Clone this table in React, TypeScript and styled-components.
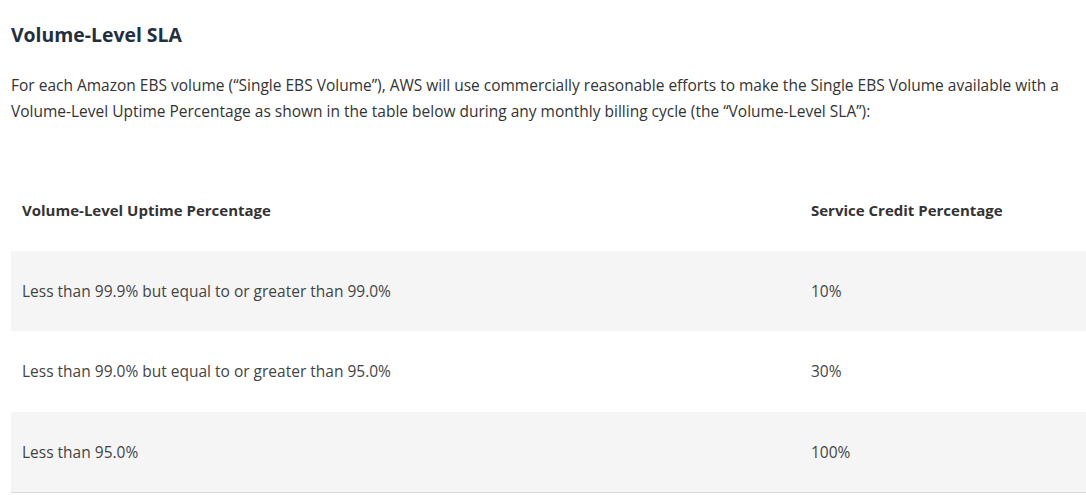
import React from "react";
import styled, { createGlobalStyle } from "styled-components";

const GlobalStyle = createGlobalStyle`
  html, body { margin: 0; padding: 0; background: #ffffff; }
  body { font-family: "Open Sans", "Noto Sans", sans-serif; color: #333333; }
`;

const Page = styled.main`
  padding: 21px 0 0 11px;
  width: 1086px;
  box-sizing: border-box;
  overflow: hidden;
`;

const Heading = styled.h2`
  margin: 0;
  font-size: 19.4px;
  line-height: 28px;
  font-weight: 700;
  color: #232f3e;
`;

const Paragraph = styled.p`
  margin: 23px 0 0;
  font-size: 15.5px;
  line-height: 26px;
  color: #333333;
`;

const Table = styled.table`
  margin-top: 46px;
  width: 1075px;
  border-collapse: collapse;
  border-bottom: 1px solid #d5dbdb;
`;

const Row = styled.tr<{ $shaded?: boolean }>`
  background: ${(p) => (p.$shaded ? "#f5f5f5" : "#ffffff")};
`;

const HeadCell = styled.th<{ $w?: number }>`
  text-align: left;
  padding: 28px 11px;
  height: 24.5px;
  font-size: 15px;
  line-height: 24.5px;
  font-weight: 700;
  color: #333333;
  width: ${(p) => (p.$w ? `${p.$w}px` : "auto")};
  box-sizing: content-box;
`;

const Cell = styled.td`
  text-align: left;
  padding: 28px 11px;
  font-size: 15.5px;
  line-height: 24.5px;
  color: #444444;
`;

const rows = [
  ["Less than 99.9% but equal to or greater than 99.0%", "10%"],
  ["Less than 99.0% but equal to or greater than 95.0%", "30%"],
  ["Less than 95.0%", "100%"],
];

export default function App() {
  return (
    <>
      <GlobalStyle />
      <Page>
        <Heading>Volume-Level SLA</Heading>
        <Paragraph>
          For each Amazon EBS volume (“Single EBS Volume”), AWS will use commercially reasonable efforts to make the
          Single EBS Volume available with a Volume-Level Uptime Percentage as shown in the table below during any
          monthly billing cycle (the “Volume-Level SLA”):
        </Paragraph>
        <Table>
          <thead>
            <Row>
              <HeadCell $w={767}>Volume-Level Uptime Percentage</HeadCell>
              <HeadCell>Service Credit Percentage</HeadCell>
            </Row>
          </thead>
          <tbody>
            {rows.map((r, i) => (
              <Row key={i} $shaded={i % 2 === 0}>
                <Cell>{r[0]}</Cell>
                <Cell>{r[1]}</Cell>
              </Row>
            ))}
          </tbody>
        </Table>
      </Page>
    </>
  );
}
